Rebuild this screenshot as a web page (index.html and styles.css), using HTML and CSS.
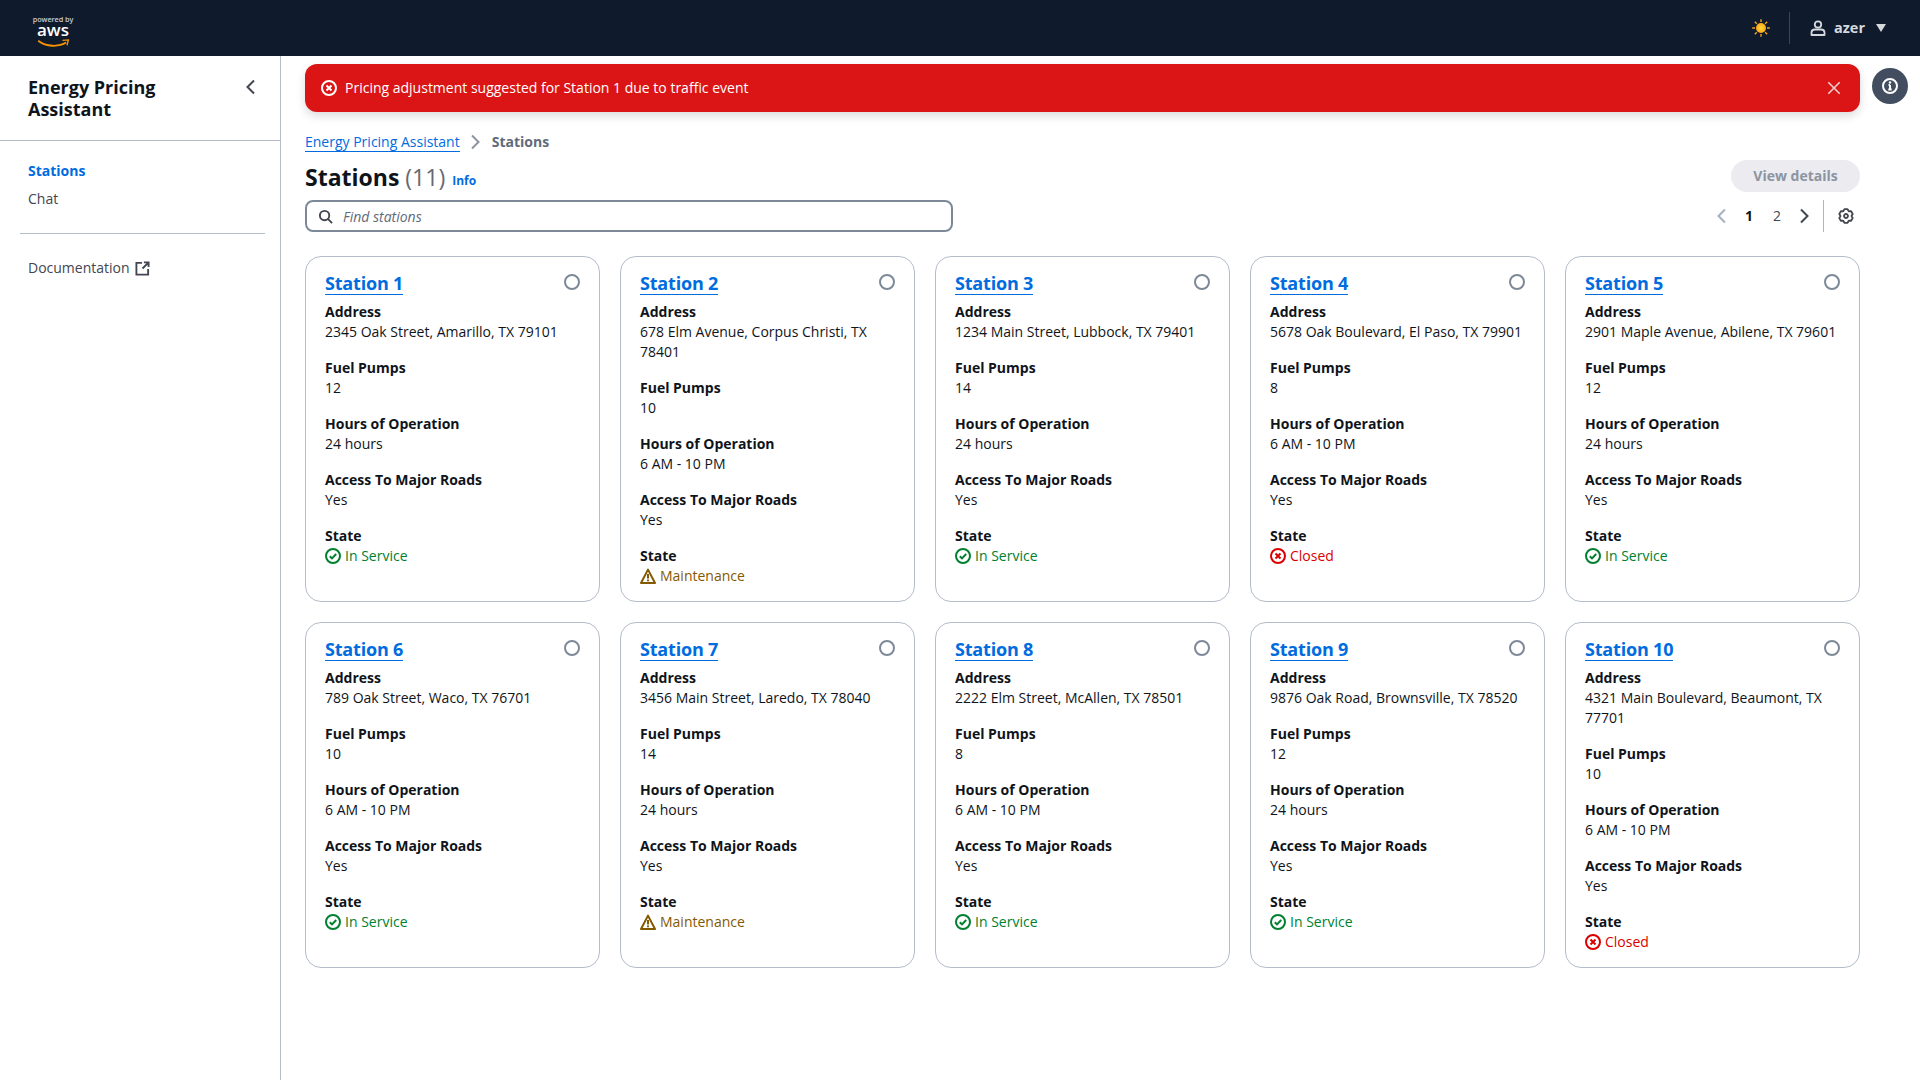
FILE: index.html
```html
<!DOCTYPE html>
<html lang="en">
<head>
<meta charset="utf-8">
<title>Stations</title>
<link rel="stylesheet" href="styles.css">
</head>
<body>
<svg class="defs" aria-hidden="true">
  <symbol id="i-ok" viewBox="0 0 16 16"><circle cx="8" cy="8" r="7" fill="none" stroke="currentColor" stroke-width="2"/><path d="M4.8 8.2 7 10.4l4.2-4.4" fill="none" stroke="currentColor" stroke-width="2"/></symbol>
  <symbol id="i-err" viewBox="0 0 16 16"><circle cx="8" cy="8" r="7" fill="none" stroke="currentColor" stroke-width="2"/><path d="m5.5 5.5 5 5m0-5-5 5" fill="none" stroke="currentColor" stroke-width="2"/></symbol>
  <symbol id="i-warn" viewBox="0 0 16 16"><path d="M8 1.6 15 15H1z" fill="none" stroke="currentColor" stroke-width="2" stroke-linejoin="round"/><path d="M8 6v4.4M8 11.4v1.8" fill="none" stroke="currentColor" stroke-width="2"/></symbol>
  <symbol id="i-left" viewBox="0 0 16 16"><path d="M11 1.500 4.500 8l6.500 6.500" fill="none" stroke="currentColor" stroke-width="2"/></symbol>
  <symbol id="i-right" viewBox="0 0 16 16"><path d="M5 1.500 11.500 8 5 14.500" fill="none" stroke="currentColor" stroke-width="2"/></symbol>
</svg>

<header class="topbar">
  <div class="logo">
    <span class="logo-powered">powered by</span>
    <span class="logo-aws">aws</span>
    <svg class="logo-smile" viewBox="0 0 36 10"><path d="M1 2c9 7 23 7 31 2" fill="none" stroke="#f79400" stroke-width="2"/><path d="M28 1.500 34.500 1 33 7" fill="none" stroke="#f79400" stroke-width="1.500"/></svg>
  </div>
  <div class="topbar-right">
    <svg class="sun" viewBox="0 0 18 18"><defs><radialGradient id="sung"><stop offset="0" stop-color="#ffdd33"/><stop offset="1" stop-color="#f9a51a"/></radialGradient></defs><circle cx="9" cy="9" r="5" fill="url(#sung)"/><path d="M9 .2v2.800M9 15v2.800M.2 9H3M15 9h2.800M2.800 2.800l2 2M13.200 13.200l2 2M2.800 15.200l2-2M13.200 4.800l2-2" stroke="#eda41f" stroke-width="1.400"/></svg>
    <span class="topbar-sep"></span>
    <svg class="user" viewBox="0 0 16 16"><circle cx="8" cy="4.500" r="3.200" fill="none" stroke="currentColor" stroke-width="1.800"/><path d="M1.500 15v-2.500C1.500 10.500 3 9.500 5 9.500h6c2 0 3.500 1 3.500 3V15z" fill="none" stroke="currentColor" stroke-width="1.800" stroke-linejoin="round"/></svg>
    <span class="username">azer</span>
    <span class="caret"></span>
  </div>
</header>

<div class="shell">
  <nav class="sidebar">
    <div class="side-head">
      <h2 class="side-title">Energy Pricing Assistant</h2>
      <svg class="side-collapse"><use href="#i-left"/></svg>
    </div>
    <ul class="side-list">
      <li class="side-active">Stations</li>
      <li>Chat</li>
    </ul>
    <hr class="side-rule">
    <div class="side-doc">Documentation
      <svg class="ext" viewBox="0 0 16 16"><path d="M14 8.500V14.500H1.500V2H7.500M14.500 1.500 8 8M9.500 1.500h5v5" fill="none" stroke="currentColor" stroke-width="2"/></svg>
    </div>
  </nav>

  <main class="main">
    <div class="flash">
      <svg class="flash-icon"><use href="#i-err"/></svg>
      <span class="flash-text">Pricing adjustment suggested for Station 1 due to traffic event</span>
      <svg class="flash-close" viewBox="0 0 16 16"><path d="m1.500 1.500 13 13M14.500 1.500l-13 13" fill="none" stroke="currentColor" stroke-width="1.800"/></svg>
    </div>

    <div class="crumbs">
      <a class="crumb-link">Energy Pricing Assistant</a>
      <svg class="crumb-sep"><use href="#i-right"/></svg>
      <span class="crumb-current">Stations</span>
    </div>

    <div class="title-row">
      <h1 class="title">Stations <span class="count">(11)</span></h1>
      <a class="info">Info</a>
      <button class="btn-disabled">View details</button>
    </div>

    <div class="tools">
      <div class="search">
        <svg class="search-icon" viewBox="0 0 16 16"><circle cx="7" cy="7" r="5" fill="none" stroke="currentColor" stroke-width="2"/><path d="m15 15-4.500-4.500" fill="none" stroke="currentColor" stroke-width="2"/></svg>
        <span class="search-ph">Find stations</span>
      </div>
      <div class="pager">
        <svg class="pg-arrow pg-off pg-prev"><use href="#i-left"/></svg>
        <span class="pg-num pg-cur">1</span>
        <span class="pg-num">2</span>
        <svg class="pg-arrow pg-next"><use href="#i-right"/></svg>
        <span class="pg-sep"></span>
        <svg class="gear" viewBox="-8 -8 16 16"><path d="M-1.570-6.820 1.570-6.820 2.750-4.760 5.120-4.770 6.690-2.050 5.500 0 6.690 2.050 5.120 4.770 2.750 4.760 1.570 6.820-1.570 6.820-2.750 4.760-5.120 4.770-6.690 2.050-5.500 0-6.690-2.050-5.120-4.770-2.750-4.760Z" fill="none" stroke="currentColor" stroke-width="1.800" stroke-linejoin="round"/><circle r="2" fill="none" stroke="currentColor" stroke-width="1.800"/></svg>
      </div>
    </div>

    <div class="cards">
      <article class="card"><a class="card-title">Station 1</a><span class="radio"></span>
        <div class="field"><b>Address</b><span>2345 Oak Street, Amarillo, TX 79101</span></div>
        <div class="field"><b>Fuel Pumps</b><span>12</span></div>
        <div class="field"><b>Hours of Operation</b><span>24 hours</span></div>
        <div class="field"><b>Access To Major Roads</b><span>Yes</span></div>
        <div class="field"><b>State</b><span class="st st-ok"><svg class="st-icon"><use href="#i-ok"/></svg>In Service</span></div>
      </article>
      <article class="card"><a class="card-title">Station 2</a><span class="radio"></span>
        <div class="field"><b>Address</b><span>678 Elm Avenue, Corpus Christi, TX 78401</span></div>
        <div class="field"><b>Fuel Pumps</b><span>10</span></div>
        <div class="field"><b>Hours of Operation</b><span>6 AM - 10 PM</span></div>
        <div class="field"><b>Access To Major Roads</b><span>Yes</span></div>
        <div class="field"><b>State</b><span class="st st-warn"><svg class="st-icon"><use href="#i-warn"/></svg>Maintenance</span></div>
      </article>
      <article class="card"><a class="card-title">Station 3</a><span class="radio"></span>
        <div class="field"><b>Address</b><span>1234 Main Street, Lubbock, TX 79401</span></div>
        <div class="field"><b>Fuel Pumps</b><span>14</span></div>
        <div class="field"><b>Hours of Operation</b><span>24 hours</span></div>
        <div class="field"><b>Access To Major Roads</b><span>Yes</span></div>
        <div class="field"><b>State</b><span class="st st-ok"><svg class="st-icon"><use href="#i-ok"/></svg>In Service</span></div>
      </article>
      <article class="card"><a class="card-title">Station 4</a><span class="radio"></span>
        <div class="field"><b>Address</b><span>5678 Oak Boulevard, El Paso, TX 79901</span></div>
        <div class="field"><b>Fuel Pumps</b><span>8</span></div>
        <div class="field"><b>Hours of Operation</b><span>6 AM - 10 PM</span></div>
        <div class="field"><b>Access To Major Roads</b><span>Yes</span></div>
        <div class="field"><b>State</b><span class="st st-err"><svg class="st-icon"><use href="#i-err"/></svg>Closed</span></div>
      </article>
      <article class="card"><a class="card-title">Station 5</a><span class="radio"></span>
        <div class="field"><b>Address</b><span>2901 Maple Avenue, Abilene, TX 79601</span></div>
        <div class="field"><b>Fuel Pumps</b><span>12</span></div>
        <div class="field"><b>Hours of Operation</b><span>24 hours</span></div>
        <div class="field"><b>Access To Major Roads</b><span>Yes</span></div>
        <div class="field"><b>State</b><span class="st st-ok"><svg class="st-icon"><use href="#i-ok"/></svg>In Service</span></div>
      </article>
      <article class="card"><a class="card-title">Station 6</a><span class="radio"></span>
        <div class="field"><b>Address</b><span>789 Oak Street, Waco, TX 76701</span></div>
        <div class="field"><b>Fuel Pumps</b><span>10</span></div>
        <div class="field"><b>Hours of Operation</b><span>6 AM - 10 PM</span></div>
        <div class="field"><b>Access To Major Roads</b><span>Yes</span></div>
        <div class="field"><b>State</b><span class="st st-ok"><svg class="st-icon"><use href="#i-ok"/></svg>In Service</span></div>
      </article>
      <article class="card"><a class="card-title">Station 7</a><span class="radio"></span>
        <div class="field"><b>Address</b><span>3456 Main Street, Laredo, TX 78040</span></div>
        <div class="field"><b>Fuel Pumps</b><span>14</span></div>
        <div class="field"><b>Hours of Operation</b><span>24 hours</span></div>
        <div class="field"><b>Access To Major Roads</b><span>Yes</span></div>
        <div class="field"><b>State</b><span class="st st-warn"><svg class="st-icon"><use href="#i-warn"/></svg>Maintenance</span></div>
      </article>
      <article class="card"><a class="card-title">Station 8</a><span class="radio"></span>
        <div class="field"><b>Address</b><span>2222 Elm Street, McAllen, TX 78501</span></div>
        <div class="field"><b>Fuel Pumps</b><span>8</span></div>
        <div class="field"><b>Hours of Operation</b><span>6 AM - 10 PM</span></div>
        <div class="field"><b>Access To Major Roads</b><span>Yes</span></div>
        <div class="field"><b>State</b><span class="st st-ok"><svg class="st-icon"><use href="#i-ok"/></svg>In Service</span></div>
      </article>
      <article class="card"><a class="card-title">Station 9</a><span class="radio"></span>
        <div class="field"><b>Address</b><span>9876 Oak Road, Brownsville, TX 78520</span></div>
        <div class="field"><b>Fuel Pumps</b><span>12</span></div>
        <div class="field"><b>Hours of Operation</b><span>24 hours</span></div>
        <div class="field"><b>Access To Major Roads</b><span>Yes</span></div>
        <div class="field"><b>State</b><span class="st st-ok"><svg class="st-icon"><use href="#i-ok"/></svg>In Service</span></div>
      </article>
      <article class="card"><a class="card-title">Station 10</a><span class="radio"></span>
        <div class="field"><b>Address</b><span>4321 Main Boulevard, Beaumont, TX 77701</span></div>
        <div class="field"><b>Fuel Pumps</b><span>10</span></div>
        <div class="field"><b>Hours of Operation</b><span>6 AM - 10 PM</span></div>
        <div class="field"><b>Access To Major Roads</b><span>Yes</span></div>
        <div class="field"><b>State</b><span class="st st-err"><svg class="st-icon"><use href="#i-err"/></svg>Closed</span></div>
      </article>
    </div>
  </main>

  <aside class="rail">
    <span class="rail-btn">
      <svg viewBox="0 0 16 16" class="rail-icon"><circle cx="8" cy="8" r="7" fill="none" stroke="currentColor" stroke-width="2"/><path d="M8 7v4.500M6.300 11.500h3.400M6.500 7H8" fill="none" stroke="currentColor" stroke-width="2"/><circle cx="8" cy="4.500" r="1.200" fill="currentColor"/></svg>
    </span>
  </aside>
</div>
</body>
</html>
```

FILE: styles.css
```css
* { box-sizing: border-box; }
html, body { margin: 0; height: 100%; }
body {
  font-family: "Open Sans", "Noto Sans", sans-serif;
  font-size: 14px;
  line-height: 20px;
  color: #0f141a;
  background: #fff;
  overflow: hidden;
}
.defs { display: none; }

.topbar {
  height: 56px;
  background: #0f1b2d;
  display: flex;
  align-items: center;
  justify-content: space-between;
  padding: 0 34px 0 33px;
}
.logo {
  width: 40px;
  height: 40px;
  margin-top: -16px;
  display: flex;
  flex-direction: column;
  align-items: center;
  color: #fff;
}
.logo-powered { font-size: 7.300px; line-height: 9px; color: #c8ccd2; white-space: nowrap; font-weight: 600; margin-top: 15px; letter-spacing: -.1px; }
.logo-aws { font-size: 17px; line-height: 12px; font-weight: 600; letter-spacing: 0; }
.logo-smile { width: 33px; height: 9px; display: block; margin-top: 3px; flex: none; }
.topbar-right { display: flex; align-items: center; color: #d5d9de; }
.sun { width: 18px; height: 18px; display: block; margin-right: -1px; }
.topbar-sep { width: 1px; height: 32px; background: #424650; margin: 0 20px 0 20px; }
.user { width: 16px; height: 16px; margin-right: 8px; display: block; }
.username { font-weight: 700; font-size: 14.500px; }
.caret {
  width: 0; height: 0; margin-left: 11px; margin-right: 0;
  border-left: 5.500px solid transparent;
  border-right: 5.500px solid transparent;
  border-top: 8px solid #d5d9de;
}

.shell { display: flex; height: calc(100vh - 56px); }

.sidebar { width: 281px; flex: none; border-right: 1px solid #b4bdc9; }
.side-head {
  height: 85px;
  padding: 20px 21px 0 28px;
  border-bottom: 1px solid #b4bdc9;
  display: flex;
  align-items: flex-start;
  justify-content: space-between;
}
.side-title { margin: 0; width: 170px; font-size: 18px; line-height: 22px; font-weight: 700; }
.side-collapse { width: 16px; height: 16px; color: #424650; margin: 3px 0 0; }
.side-list { list-style: none; margin: 0; padding: 20px 28px 0; color: #424650; }
.side-list li { height: 28px; line-height: 20px; padding-top: 0; }
.side-active { color: #006ce0; font-weight: 700; }
.side-rule { border: 0; border-top: 1px solid #b4bdc9; margin: 16px 15px 0 20px; }
.side-doc { margin: 24px 0 0 28px; color: #424650; display: flex; align-items: center; gap: 5px; }
.ext { width: 15px; height: 15px; color: #424650; }

.main { flex: 1; min-width: 0; padding: 8px 0 0 24px; }

.flash {
  height: 48px;
  background: #db1515;
  border-radius: 12px;
  box-shadow: 0 4px 10px rgba(0, 7, 22, .14);
  color: #fff;
  display: flex;
  align-items: center;
  padding: 0 19px 0 16px;
}
.flash-icon { width: 16px; height: 16px; flex: none; margin-right: 8px; }
.flash-text { flex: 1; }
.flash-close { width: 14px; height: 14px; color: #f3d0d0; }

.crumbs { margin-top: 20px; display: flex; align-items: center; height: 20px; }
.crumb-link { color: #006ce0; border-bottom: 1px solid #006ce0; line-height: 18px; margin-top: 1px; }
.crumb-sep { width: 16px; height: 16px; color: #8c949f; margin: 0 9px 0 7px; }
.crumb-current { color: #5f6b7a; font-weight: 700; }

.title-row { display: flex; align-items: center; margin-top: 7px; height: 36px; }
.title { margin: 0; font-size: 23px; line-height: 30px; font-weight: 700; }
.count { font-weight: 400; color: #656871; }
.info { color: #006ce0; font-size: 12px; font-weight: 700; margin: 7px 0 0 7px; }
.btn-disabled {
  margin-left: auto;
  margin-top: -2px;
  width: 129px;
  height: 32px;
  border: 0;
  border-radius: 16px;
  background: #ebebf0;
  color: #8c94a1;
  font: 700 14px/20px "Open Sans", sans-serif;
}

.tools { display: flex; align-items: center; justify-content: space-between; margin-top: 5px; height: 32px; }
.search {
  width: 648px;
  height: 32px;
  border: 2px solid #7d8998;
  border-radius: 8px;
  display: flex;
  align-items: center;
  padding-left: 11px;
}
.search-icon { width: 15px; height: 15px; color: #424650; margin-right: 10px; }
.search-ph { font-style: italic; color: #5f6b7a; padding-top: 1px; }
.pager { display: flex; align-items: center; color: #424650; }
.pg-arrow { width: 16px; height: 16px; display: block; }
.pg-off { color: #a5b0c0; }
.pg-prev { margin-right: 4px; }
.pg-next { margin-left: 5px; }
.pg-num { width: 28px; text-align: center; }
.pg-cur { font-weight: 700; color: #0f141a; margin-left: 1px; }
.pg-sep { width: 1px; height: 32px; background: #b4b4bb; margin: 0 14px 0 11px; }
.gear { width: 16px; height: 16px; margin-right: 6px; display: block; }

.cards {
  margin-top: 24px;
  display: grid;
  grid-template-columns: repeat(5, 295px);
  gap: 20px;
}
.card {
  position: relative;
  height: 346px;
  border: 1px solid #b4bdc9;
  border-radius: 16px;
  padding: 15px 19px;
}
.card-title {
  display: inline-block;
  color: #006ce0;
  font-size: 18px;
  line-height: 22px;
  font-weight: 700;
  letter-spacing: -.01em;
  border-bottom: 1px solid #006ce0;
}
.radio {
  position: absolute;
  top: 17px;
  right: 19px;
  width: 16px;
  height: 16px;
  border: 2px solid #7d8998;
  border-radius: 50%;
}
.field { display: flex; flex-direction: column; margin-bottom: 16px; }
.card-title + .radio + .field { margin-top: 7px; }
.field:last-child { margin-bottom: 0; }
.field b { font-weight: 700; }
.st { display: flex; align-items: center; }
.st-icon { width: 16px; height: 16px; margin-right: 4px; flex: none; }
.st-ok { color: #00802f; }
.st-err { color: #db0000; }
.st-warn { color: #855900; }

.rail { width: 60px; flex: none; padding: 12px 0 0 12px; }
.rail-btn {
  width: 36px;
  height: 36px;
  border-radius: 50%;
  background: #424e5f;
  color: #fff;
  display: flex;
  align-items: center;
  justify-content: center;
}
.rail-icon { width: 16px; height: 16px; }
```
